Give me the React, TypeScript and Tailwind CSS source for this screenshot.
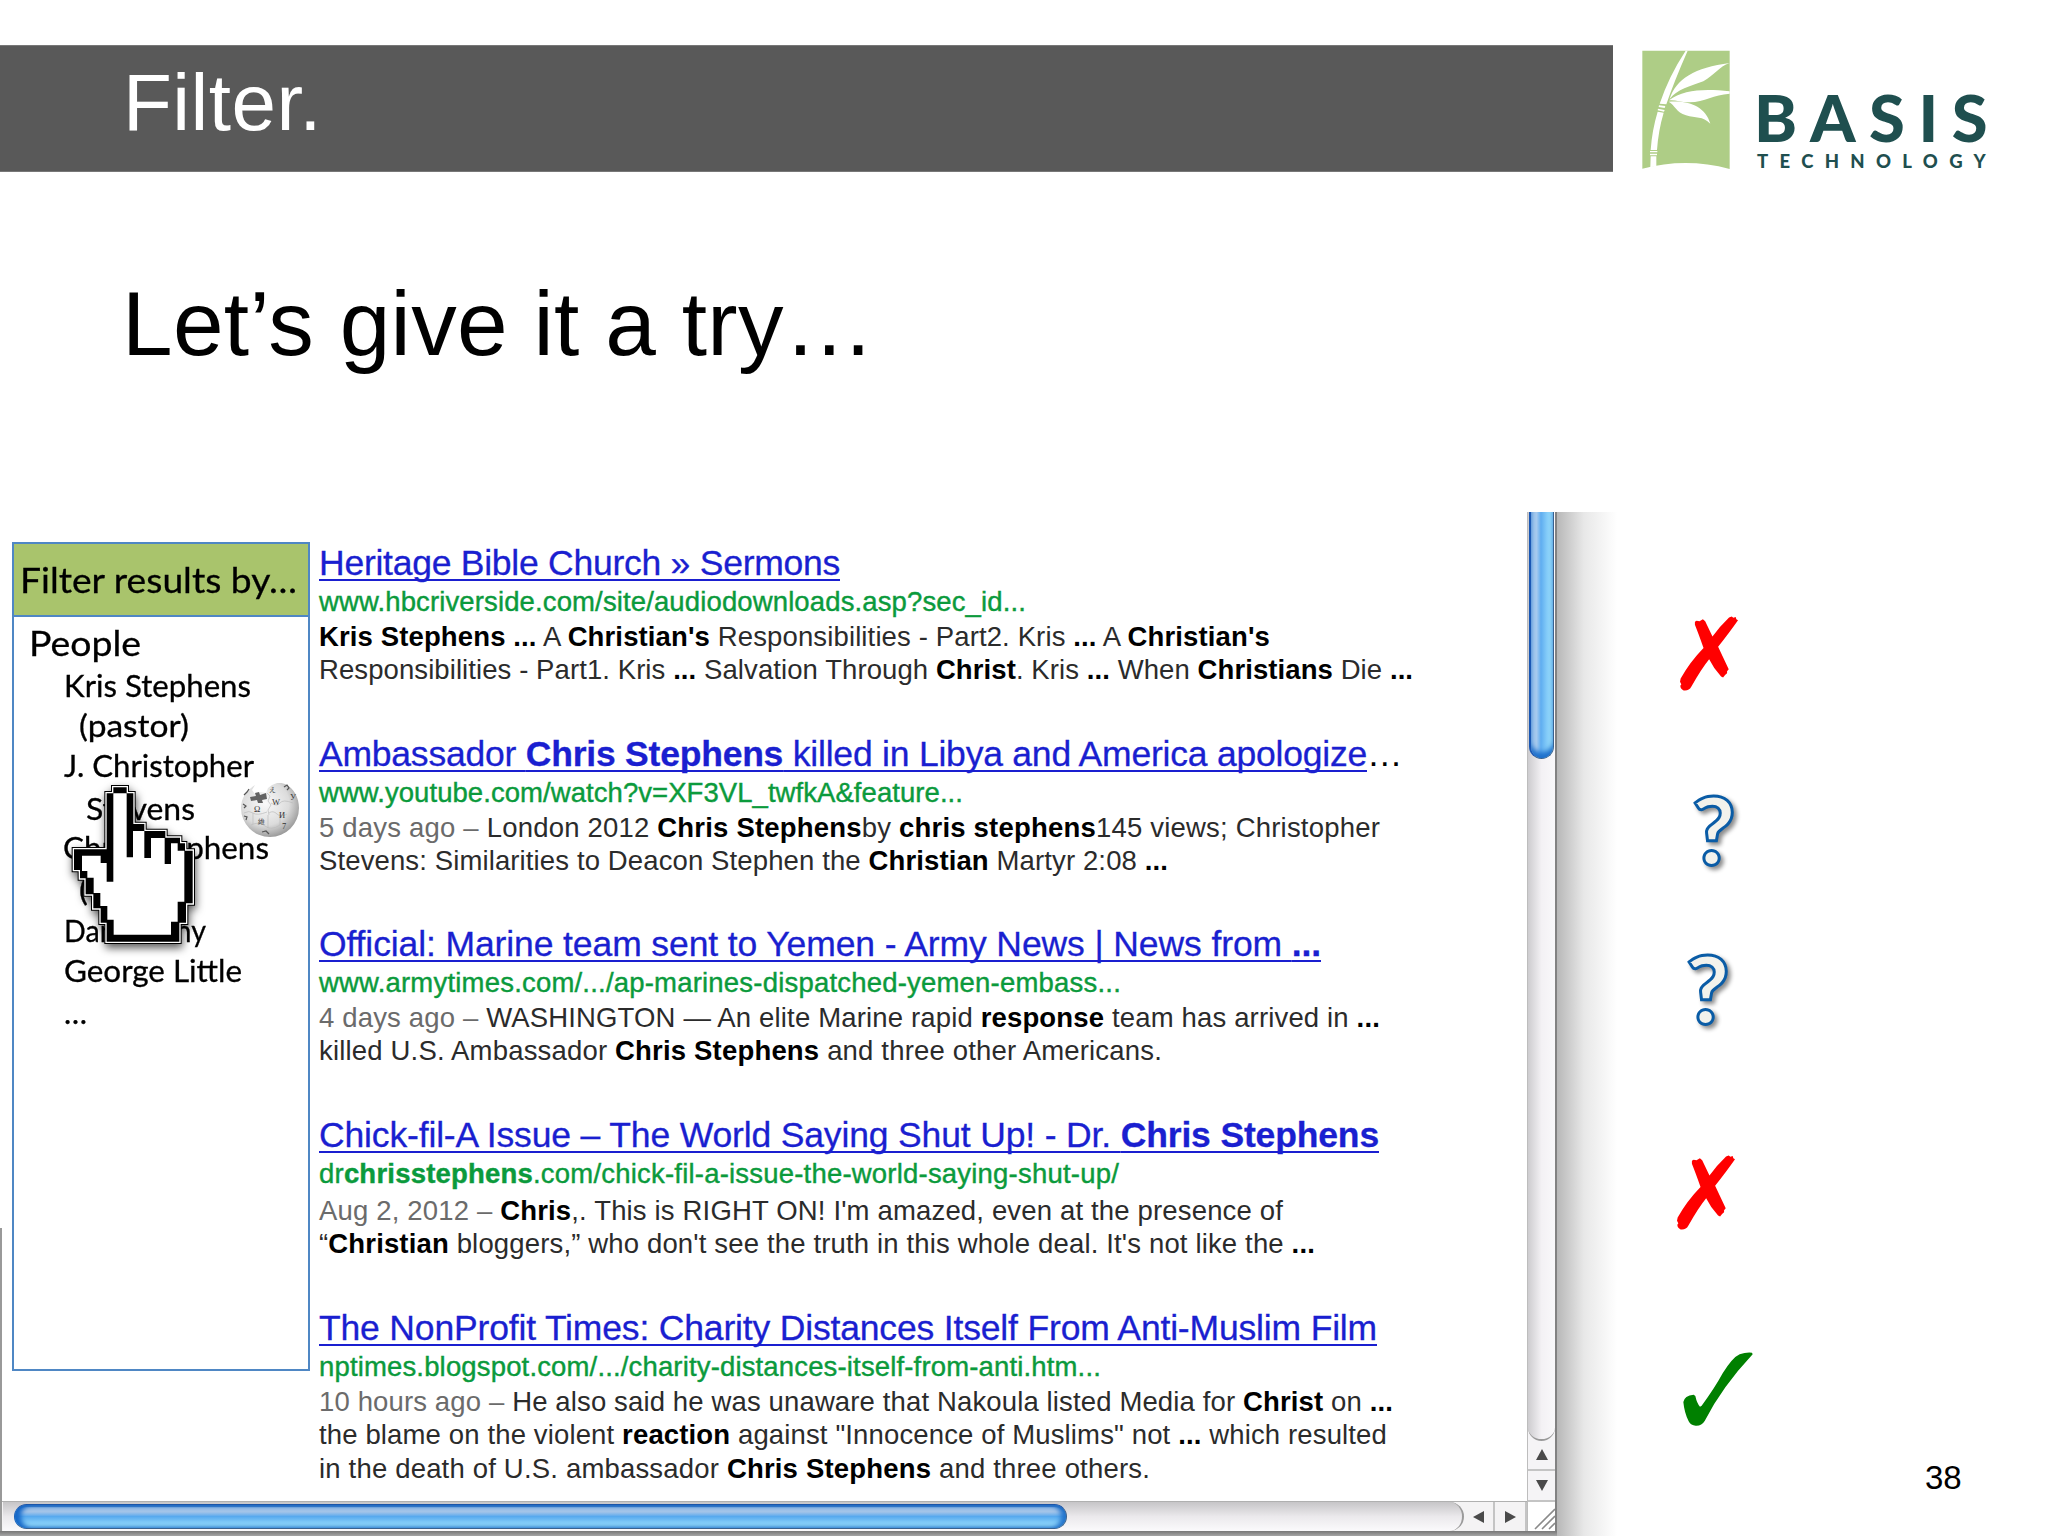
import { useLayoutEffect, useRef, useState } from "react";
import type { CSSProperties, ReactNode } from "react";

interface FitProps {
  width: number;
  stretch?: boolean;
  className?: string;
  children: ReactNode;
}

// Text that fills exactly `width`, by tracking or by horizontal scale
function Fit({ width, stretch = false, className = "", children }: FitProps) {
  const ref = useRef<HTMLSpanElement>(null);
  const [style, setStyle] = useState<CSSProperties>({});

  useLayoutEffect(() => {
    const el = ref.current;
    if (!el) return;
    const natural = el.getBoundingClientRect().width;
    const count = el.textContent?.length || 1;
    setStyle(
      stretch
        ? { transform: `scaleX(${width / natural})` }
        : { letterSpacing: `${(width - natural) / count}px` }
    );
  }, [width, stretch]);

  return (
    <span
      ref={ref}
      style={style}
      className={`inline-block origin-left whitespace-pre ${className}`}
    >
      {children}
    </span>
  );
}

interface Line {
  width: number;
  content: ReactNode;
}

interface Result {
  title: Line;
  cut?: boolean;
  url: Line;
  snippet: Line[];
  className: string;
  snippetClassName: string;
}

const B = ({ children }: { children: ReactNode }) => (
  <b className="font-bold text-black">{children}</b>
);

const Age = ({ children }: { children: ReactNode }) => (
  <span className="text-[#6b6b6b]">{children}</span>
);

const results: Result[] = [
  {
    title: { width: 521, content: "Heritage Bible Church » Sermons" },
    url: { width: 707, content: "www.hbcriverside.com/site/audiodownloads.asp?sec_id..." },
    snippet: [
      {
        width: 951,
        content: (
          <>
            <B>Kris Stephens ...</B> A <B>Christian's</B> Responsibilities - Part2. Kris <B>...</B> A{" "}
            <B>Christian's</B>
          </>
        ),
      },
      {
        width: 1094,
        content: (
          <>
            Responsibilities - Part1. Kris <B>...</B> Salvation Through <B>Christ</B>. Kris{" "}
            <B>...</B> When <B>Christians</B> Die <B>...</B>
          </>
        ),
      },
    ],
    className: "h-[190.5px]",
    snippetClassName: "mt-px",
  },
  {
    title: {
      width: 1048,
      content: (
        <>
          Ambassador <b>Chris Stephens</b> killed in Libya and America apologize
        </>
      ),
    },
    cut: true,
    url: { width: 644, content: "www.youtube.com/watch?v=XF3VL_twfkA&feature..." },
    snippet: [
      {
        width: 1061,
        content: (
          <>
            <Age>5 days ago –</Age> London 2012 <B>Chris Stephens</B>by <B>chris stephens</B>145
            views; Christopher
          </>
        ),
      },
      {
        width: 849,
        content: (
          <>
            Stevens: Similarities to Deacon Stephen the <B>Christian</B> Martyr 2:08 <B>...</B>
          </>
        ),
      },
    ],
    className: "h-[190.5px]",
    snippetClassName: "mt-px",
  },
  {
    title: {
      width: 1002,
      content: (
        <>
          Official: Marine team sent to Yemen - Army News | News from <b>...</b>
        </>
      ),
    },
    url: { width: 802, content: "www.armytimes.com/.../ap-marines-dispatched-yemen-embass..." },
    snippet: [
      {
        width: 1061,
        content: (
          <>
            <Age>4 days ago –</Age> WASHINGTON — An elite Marine rapid <B>response</B> team has
            arrived in <B>...</B>
          </>
        ),
      },
      {
        width: 843,
        content: (
          <>
            killed U.S. Ambassador <B>Chris Stephens</B> and three other Americans.
          </>
        ),
      },
    ],
    className: "h-[191px]",
    snippetClassName: "mt-px",
  },
  {
    title: {
      width: 1060,
      content: (
        <>
          Chick-fil-A Issue – The World Saying Shut Up! - Dr. <b>Chris Stephens</b>
        </>
      ),
    },
    url: {
      width: 800,
      content: (
        <>
          dr<b>chrisstephens</b>.com/chick-fil-a-issue-the-world-saying-shut-up/
        </>
      ),
    },
    snippet: [
      {
        width: 964,
        content: (
          <>
            <Age>Aug 2, 2012 –</Age> <B>Chris</B>,. This is RIGHT ON! I'm amazed, even at the
            presence of
          </>
        ),
      },
      {
        width: 996,
        content: (
          <>
            “<B>Christian</B> bloggers,” who don't see the truth in this whole deal. It's not like
            the <B>...</B>
          </>
        ),
      },
    ],
    className: "h-[193px]",
    snippetClassName: "mt-[3px]",
  },
  {
    title: {
      width: 1058,
      content: "The NonProfit Times: Charity Distances Itself From Anti-Muslim Film",
    },
    url: { width: 782, content: "nptimes.blogspot.com/.../charity-distances-itself-from-anti.htm..." },
    snippet: [
      {
        width: 1074,
        content: (
          <>
            <Age>10 hours ago –</Age> He also said he was unaware that Nakoula listed Media for{" "}
            <B>Christ</B> on <B>...</B>
          </>
        ),
      },
      {
        width: 1068,
        content: (
          <>
            the blame on the violent <B>reaction</B> against "Innocence of Muslims" not <B>...</B>{" "}
            which resulted
          </>
        ),
      },
      {
        width: 831,
        content: (
          <>
            in the death of U.S. ambassador <B>Chris Stephens</B> and three others.
          </>
        ),
      },
    ],
    className: "h-[190px]",
    snippetClassName: "mt-px",
  },
];

const people = [
  { name: "Kris Stephens", width: 187, className: "h-10 pl-[50px]" },
  { name: "(pastor)", width: 110, className: "h-10 pl-[65px]" },
  { name: "J. Christopher", width: 190, className: "h-[42.5px] pl-[50px]" },
  { name: "Stevens", width: 109, className: "h-[39.5px] pl-[72px]" },
  { name: "Chris Stephens", width: 206, className: "h-[42px] pl-[49px]" },
  { name: "(", width: 9, className: "h-[41px] pl-[65px]" },
  { name: "Dan Denny", width: 142, className: "h-[39.5px] pl-[50px]" },
  { name: "George Little", width: 178, className: "h-[42px] pl-[50px]" },
  { name: "…", width: 23, className: "h-10 pl-[50px]" },
];

function BambooMark() {
  return (
    <svg className="mt-[50px] ml-[29px] h-[120px] w-[88px] shrink-0" viewBox="126 60 264 360">
      <path d="M127 62H389V417Q258 382 127 416Z" fill="#aecd86" />
      <g fill="#fff">
        <path d="M257 62H263Q222 155 199 223L179 221Q207 138 257 62Z" />
        <path d="M177 226L196 228 194 234 176 231ZM174 236L194 240 192 245 173 241Z" />
        <path d="M173 245L191 248Q175 302 171 360H152Q156 301 173 245Z" />
        <path d="M150 363H172V367H150ZM150 371H171V376H150ZM152 379H169V409L151 412Z" />
        <path d="M209 207C227 148 285 112 389 99C357 110 341 137 310 154C270 169 232 177 209 207Z" />
        <path d="M207 211C250 178 315 176 389 184V191C340 194 316 216 268 217C242 218 225 208 207 211Z" />
        <path d="M206 215C266 210 317 229 331 281C308 258 287 265 258 256C228 247 226 226 206 215Z" />
      </g>
    </svg>
  );
}

function WikipediaGlobe() {
  return (
    <svg className="absolute top-[271px] left-[241px] h-[54px] w-[58px]" viewBox="0 0 58 54">
      <defs>
        <radialGradient id="globe" cx="0.42" cy="0.38" r="0.68">
          <stop offset="0" stopColor="#fafafa" />
          <stop offset="0.6" stopColor="#dcdcdc" />
          <stop offset="1" stopColor="#8c8c8c" />
        </radialGradient>
      </defs>
      <path
        d="M14 2L11 7 14 11 20 9 25 10 27 5 31 2 36 0Q38 -1 44 1C53 5 58 15 58 25A29 29 0 0 1 0 25Q0 11 14 2Z"
        fill="url(#globe)"
      />
      <path
        d="M9 14L15 13 14 10 18 9 19 12 25 10 26 16 21 17 22 20 17 20 16 17 10 18Z"
        fill="#626262"
      />
      <path
        d="M26 10L29 13 27 18 30 22 27 27 28 32M28 30Q32 27 36 31T46 31M30 20Q36 24 39 20T52 20M3 30Q8 27 12 30T26 29M12 30V41M39 31V42M10 42Q18 38 24 43T39 42M27 32V45"
        fill="none"
        stroke="#bbb"
        strokeWidth="0.7"
      />
      <g fill="#333" fontSize="8.5" fontFamily="Liberation Serif, serif">
        <text x="13" y="29">Ω</text>
        <text x="31" y="22">W</text>
        <text x="38" y="35">И</text>
        <text x="17" y="41" fontSize="7">維</text>
        <text x="28" y="9" fontSize="7">え</text>
        <text x="49" y="17">У</text>
        <text x="41" y="46">7</text>
      </g>
      <path
        d="M43 4L46 2 48 5 46 7M3 12L6 9 8 6M2 21L5 23 3 25M3 33L6 34 5 37M21 49L25 48 28 51"
        fill="none"
        stroke="#555"
        strokeWidth="1.2"
      />
    </svg>
  );
}

function HandCursor() {
  const outline =
    "M340 52H380V70H400V162H433V183H496V203H540V220H555V242H578V400H558V458H538V515H320V458H302V415H280V373H257V325H240V300H222V238H320V70H340Z";
  return (
    <svg
      className="absolute top-[268px] left-[70px] h-[170px] w-[130px] overflow-visible drop-shadow-[1px_4px_4px_rgba(0,0,0,0.65)]"
      viewBox="210 30 390 510"
    >
      <path d={outline} stroke="#000" strokeWidth="14" />
      <path d={outline} stroke="#fff" strokeWidth="8" />
      <path d={outline} />
      <path
        d="M340 70H380V262H399V183H433V264H453V204H494V282H513V220H533V242H553V395H533V455H513V494H341V449H322V408H301V369H281V323H262V303H246V257H302V279H320V335H340Z"
        fill="#fff"
      />
    </svg>
  );
}

function FilterPanel() {
  return (
    <aside className="mt-[30px] ml-3 h-[829px] w-[298px] shrink-0 border-2 border-[#4f87c4] bg-white font-['Lato',sans-serif] text-black [-webkit-text-stroke:0.3px_black]">
      <div className="h-[73px] border-b-2 border-[#4f87c4] bg-[#a9c46c] pl-[6px] text-[35px] leading-[70px]">
        <Fit width={277} stretch>
          Filter results by…
        </Fit>
      </div>
      <div className="h-12 pl-[15px] text-[35px] leading-[50px]">
        <Fit width={112} stretch>
          People
        </Fit>
      </div>
      {people.map((p) => (
        <div key={p.name} className={`text-[30px] leading-[41px] ${p.className}`}>
          <Fit width={p.width} stretch>
            {p.name}
          </Fit>
        </div>
      ))}
    </aside>
  );
}

function ResultItem({ result }: { result: Result }) {
  return (
    <article className={result.className}>
      <h2 className="h-10 text-[35.5px] leading-[39px]">
        <Fit
          width={result.title.width}
          className="text-[#1a1fd0] underline decoration-2 underline-offset-[4px] [-webkit-text-stroke:0.3px_#1a1fd0] [text-decoration-skip-ink:none]"
        >
          {result.title.content}
        </Fit>
        {result.cut && <span className="text-black">…</span>}
      </h2>
      <div className="h-[35px] text-[27.5px] leading-[35px] text-[#0b9a3c] [-webkit-text-stroke:0.4px_#0b9a3c]">
        <Fit width={result.url.width}>{result.url.content}</Fit>
      </div>
      <div className={`text-[27.5px] leading-[33.4px] text-[#2b2b2b] ${result.snippetClassName}`}>
        {result.snippet.map((line, i) => (
          <div key={i} className="h-[33.4px]">
            <Fit width={line.width}>{line.content}</Fit>
          </div>
        ))}
      </div>
    </article>
  );
}

function HorizontalScrollbar() {
  return (
    <div className="flex h-[30px] border-t border-[#b0b0b0] bg-[#f4f3f4] pl-[3px]">
      <div className="flex w-[1461px] items-center rounded-r-full border-r-2 border-[#9a9a9a] bg-linear-to-b from-[#c6c5c7] via-[#ebe9ec] to-[#fbfafc] pl-[11px]">
        <div className="h-[25px] w-[1053px] rounded-full border border-[#38618f] border-t-[#1c55a8] border-l-[#1660bb] bg-linear-to-b from-[#a3c4e8] from-30% via-[#57a9ee] via-50% to-[#a9ebff] shadow-[inset_6px_0_5px_#1668c8,inset_-5px_0_5px_#2374cc,inset_0_2px_1px_#3a73bd]" />
      </div>
      <div className="flex w-[31px] items-center justify-center border-r-2 border-[#c4c4c4]">
        <svg className="h-3 w-3" viewBox="0 0 12 12">
          <path d="M0 6L11 0V12Z" fill="#4a4a4a" />
        </svg>
      </div>
      <div className="flex w-[32px] items-center justify-center border-r-2 border-[#c4c4c4]">
        <svg className="h-3 w-3" viewBox="0 0 12 12">
          <path d="M12 6L1 0V12Z" fill="#4a4a4a" />
        </svg>
      </div>
    </div>
  );
}

function VerticalScrollbar() {
  return (
    <div className="flex w-[30px] flex-col border-r-2 border-l border-r-[#828282] border-l-[#bdbdbd] bg-[#f5f4f6]">
      <div className="h-[929px] rounded-b-full border-b-2 border-[#9a9a9a] bg-linear-to-r from-[#cdcccf] via-[#f3f1f4] to-[#f9f8fa] px-px">
        <div className="h-[247px] w-[25px] rounded-b-full border border-t-0 border-[#38618f] border-l-2 border-l-[#1a57b4] bg-linear-to-r from-[#a8cbee] from-25% via-[#5fadf0] via-45% to-[#a9ebff] shadow-[inset_0_-6px_5px_#1e70cc]" />
      </div>
      <div className="flex h-[30px] items-center justify-center border-b-2 border-[#c4c4c4]">
        <svg className="h-3 w-3" viewBox="0 0 12 12">
          <path d="M6 0L12 11H0Z" fill="#4a4a4a" />
        </svg>
      </div>
      <div className="flex h-[31px] items-center justify-center border-b-2 border-[#c4c4c4]">
        <svg className="h-3 w-3" viewBox="0 0 12 12">
          <path d="M6 11L12 0H0Z" fill="#4a4a4a" />
        </svg>
      </div>
      <svg className="h-[29px] w-[27px] bg-white" viewBox="0 0 27 29">
        <path d="M7 27L27 7M14 27L27 14M21 27L27 21" stroke="#8a8a8a" strokeWidth="1.6" />
      </svg>
    </div>
  );
}

function Cross({ className }: { className: string }) {
  return (
    <svg className={`h-[75px] w-[58px] ${className}`} viewBox="110 106 175 225">
      <path
        d="M155 123L160 120 169 121 179 115 186 121 208 167Q230 137 258 110L266 107 271 111 278 108 280 115 285 118Q260 154 225 198L257 266 252 272 252 278 246 283 240 291 234 288Q212 265 198 236Q175 264 144 319Q137 332 121 330Q111 326 111 316L114 311 110 304 112 294Q140 244 181 202Q165 157 155 132Z"
        fill="#f00"
      />
    </svg>
  );
}

function Question({ className }: { className: string }) {
  return (
    <span
      className={`block h-[100px] font-['Lato',sans-serif] text-[94px] leading-[100px] font-black text-[#f2f2ec] drop-shadow-[3px_3px_2px_rgba(0,0,0,0.45)] [-webkit-text-stroke:3px_#0a5ca6] ${className}`}
    >
      ?
    </span>
  );
}

function Check({ className }: { className: string }) {
  return (
    <svg className={`h-[74px] w-[70px] ${className}`} viewBox="130 697 210 222">
      <path
        d="M131 847Q134 828 162 825L167 829Q172 852 181 861L186 858Q224 807 249 761Q279 713 300 704Q319 697 337 699L339 704Q247 802 195 904Q186 919 168 918Q154 918 147 905Q134 879 131 847Z"
        fill="#008000"
      />
    </svg>
  );
}

export default function App() {
  return (
    <main className="flex h-[1536px] w-[2048px] flex-col overflow-hidden bg-white font-['Liberation_Sans',Arial,sans-serif] text-black">
      <header className="flex h-[172px] shrink-0">
        <div className="mt-[45px] h-[127px] w-[1613px] shrink-0 border-y border-[#777] bg-[#595959] pl-[123px]">
          <h1 className="text-[80px] leading-[114px] text-white">
            <Fit width={199}>Filter.</Fit>
          </h1>
        </div>
        <BambooMark />
        <div className="ml-[24px] pt-[79px] font-['Lato',sans-serif] text-[#1f4f4f]">
          <div className="h-[70px] text-[65px] leading-[70px] font-black">
            <Fit width={247} className="mt-[3px]">
              BASIS
            </Fit>
          </div>
          <div className="mt-[3px] pl-[3px] text-[18.5px] leading-[18px] font-black">
            <Fit width={240}>TECHNOLOGY</Fit>
          </div>
        </div>
      </header>

      <p className="h-[340px] shrink-0 pt-[102px] pl-[122px] text-[91px] leading-[100px]">
        <Fit width={753}>Let’s give it a try…</Fit>
      </p>

      <div className="flex h-[1024px] shrink-0">
        <div className="flex flex-col">
          <div className="flex h-[1019px]">
            <section className="relative flex w-[1527px] flex-col">
              {/* window edge, visible under the filter panel */}
              <div className="absolute bottom-0 left-0 h-[303px] w-[2px] bg-[#999]" />
              <div className="flex h-[989px]">
                <FilterPanel />
                <div className="pt-8 pl-[9px]">
                  {results.map((r, i) => (
                    <ResultItem key={i} result={r} />
                  ))}
                </div>
              </div>
              <HorizontalScrollbar />
              <WikipediaGlobe />
              <HandCursor />
            </section>
            <VerticalScrollbar />
          </div>
          <div className="h-[5px] bg-linear-to-b from-[#777] to-[#a5a5a5]" />
        </div>
        <div className="w-[60px] bg-linear-to-r from-[#b8b8b8] via-[#e8e8e8] via-45% to-white" />
        <div className="w-[300px] pl-[59px]">
          <Cross className="mt-[104px] ml-[4px]" />
          <Question className="mt-[88px] ml-[16px]" />
          <Question className="mt-[59px] ml-[10px]" />
          <Cross className="mt-[117px] ml-px" />
          <Check className="mt-[122px] ml-[7px]" />
        </div>
        <div className="pt-[946px] pl-[8px] text-[33px] leading-[40px]">38</div>
      </div>
    </main>
  );
}
